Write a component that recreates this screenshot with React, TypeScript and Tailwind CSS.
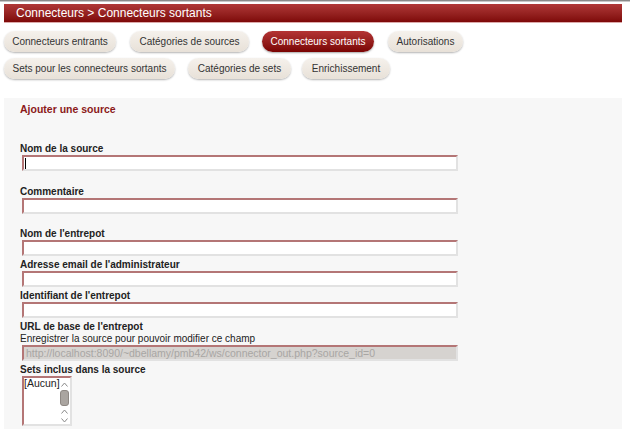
import React from "react";

const inputCls =
  "block ml-[18px] w-[436px] h-[16px] bg-white border-2 border-t-[#b47676] border-l-[#b47676] border-r-[#e2e2e2] border-b-[#e2e2e2]";

function Label({ children, className = "" }: { children: React.ReactNode; className?: string }) {
  return (
    <div className={`ml-[16px] h-[12px] leading-[15px] text-[10px] font-bold text-[#222] ${className}`}>{children}</div>
  );
}

function Btn({ children, active = false, className = "" }: { children: React.ReactNode; active?: boolean; className?: string }) {
  return (
    <div
      className={
        (active
          ? "h-[21px] rounded-full flex items-center justify-center whitespace-nowrap text-[10px] text-white bg-gradient-to-b from-[#b43434] to-[#7a0303] shadow-[0_1px_2px_rgba(0,0,0,0.35)] "
          : "h-[21px] rounded-full flex items-center justify-center whitespace-nowrap text-[10px] text-[#333] bg-gradient-to-b from-[#f5f1ec] to-[#e8e1d8] shadow-[0_1px_2px_rgba(0,0,0,0.3)] ") +
        className
      }
    >
      {children}
    </div>
  );
}

export default function App() {
  return (
    <div className="w-[630px] h-[429px] overflow-hidden bg-white font-['Liberation_Sans',Arial,sans-serif]">
      <div className="h-[1px] bg-[#8a8a8a]" />
      <div className="h-[1px] bg-[#c8c8c8]" />
      <div className="ml-[4px] mt-[2px] w-[618px] h-[19px] flex items-center pl-[12px] text-[12px] text-white bg-gradient-to-b from-[#b03838] to-[#7e0808] border-b border-[#dcaaaa]">
        Connecteurs &gt; Connecteurs sortants
      </div>

      <div className="ml-[4px] mt-[8px] flex flex-col gap-y-[6px]">
        <div className="flex">
          <Btn className="w-[112px]">Connecteurs entrants</Btn>
          <Btn className="w-[119px] ml-[14px]">Catégories de sources</Btn>
          <Btn active className="w-[112px] ml-[13px]">Connecteurs sortants</Btn>
          <Btn className="w-[75px] ml-[14px]">Autorisations</Btn>
        </div>
        <div className="flex">
          <Btn className="w-[171px]">Sets pour les connecteurs sortants</Btn>
          <Btn className="w-[103px] ml-[13px]">Catégories de sets</Btn>
          <Btn className="w-[88px] ml-[11px]">Enrichissement</Btn>
        </div>
      </div>

      <div className="ml-[4px] mt-[19px] w-[618px] h-[340px] bg-[#f7f7f7] pt-[4px]">
        <div className="ml-[16px] h-[12px] leading-[14px] text-[10.5px] font-bold text-[#8b1a1a]">Ajouter une source</div>

        <Label className="mt-[27px]">Nom de la source</Label>
        <div className={`${inputCls} mt-[2px] relative`}>
          <div className="absolute left-[1px] top-[1px] w-[1px] h-[11px] bg-black" />
        </div>

        <Label className="mt-[13px]">Commentaire</Label>
        <div className={`${inputCls} mt-[2px]`} />

        <Label className="mt-[12px]">Nom de l'entrepot</Label>
        <div className={`${inputCls} mt-[2px]`} />

        <Label className="mt-[1px]">Adresse email de l'administrateur</Label>
        <div className={`${inputCls} mt-[2px]`} />

        <Label className="mt-[1px]">Identifiant de l'entrepot</Label>
        <div className={`${inputCls} mt-[2px]`} />

        <Label className="mt-[1px]">URL de base de l'entrepot</Label>
        <div className="ml-[16px] h-[12px] leading-[15px] text-[10px] text-[#222]">
          Enregistrer la source pour pouvoir modifier ce champ
        </div>
        <div className="block ml-[18px] mt-[2px] w-[436px] h-[16px] bg-[#d6d3d0] border-2 border-t-[#b47676] border-l-[#b47676] border-r-[#e2e2e2] border-b-[#e2e2e2] pl-[2px] text-[10.5px] leading-[12px] text-[#a8a6a4] whitespace-nowrap overflow-hidden">
          http://localhost:8090/~dbellamy/pmb42/ws/connector_out.php?source_id=0
        </div>

        <Label className="mt-[1px]">Sets inclus dans la source</Label>
        <div className="ml-[18px] mt-[2px] w-[50px] h-[50px] bg-white border-2 border-t-[#b47676] border-l-[#b47676] border-r-[#e2e2e2] border-b-[#e2e2e2] flex">
          <div className="flex-1 text-[10.5px] leading-[11px] text-[#222]">[Aucun]</div>
          <div className="w-[11px] flex flex-col items-center">
            <svg width="7" height="5" viewBox="0 0 7 5" className="mt-[4px]">
              <path d="M0.5 4.5 L3.5 1 L6.5 4.5" fill="none" stroke="#8a8a8a" strokeWidth="1" />
            </svg>
            <div className="mt-[3px] w-[9px] h-[16px] rounded-[3px] bg-[#aaa5a0] border border-[#8e8883]" />
            <svg width="7" height="5" viewBox="0 0 7 5" className="mt-[3px]">
              <path d="M0.5 4.5 L3.5 1 L6.5 4.5" fill="none" stroke="#8a8a8a" strokeWidth="1" />
            </svg>
            <svg width="7" height="5" viewBox="0 0 7 5" className="mt-[4px]">
              <path d="M0.5 0.5 L3.5 4 L6.5 0.5" fill="none" stroke="#8a8a8a" strokeWidth="1" />
            </svg>
          </div>
        </div>
      </div>
    </div>
  );
}
